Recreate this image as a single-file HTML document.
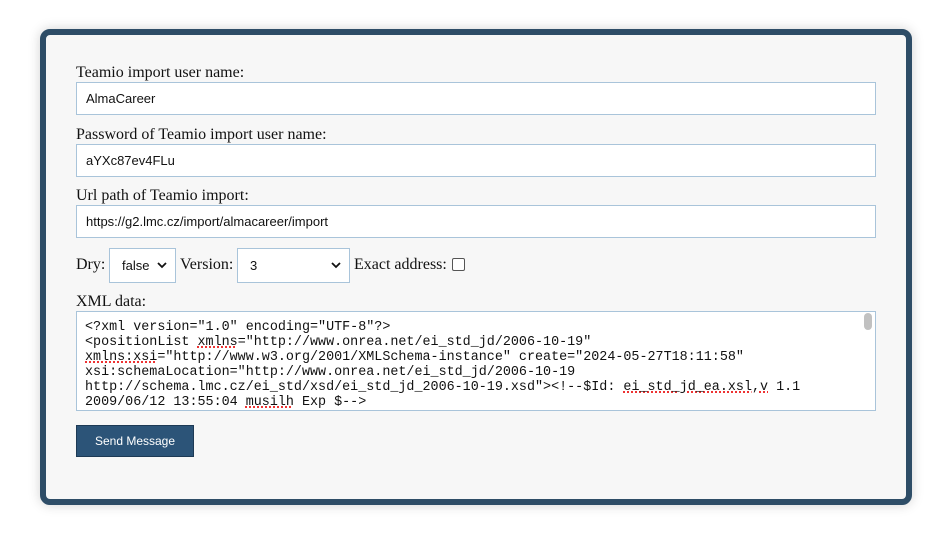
<!DOCTYPE html>
<html><head><style>
body{margin:0;width:943px;height:538px;background:#fff;position:relative;overflow:hidden;font-family:"Liberation Serif",serif;font-size:16px;color:#111}
.card{position:absolute;left:40px;top:29px;width:860px;height:464px;border:6px solid #2e4d67;border-radius:10px;background:#f7f7f7;box-shadow:0 0 12px rgba(0,0,0,.18)}
.lbl{position:absolute;left:76px;}
.inp{position:absolute;left:76px;border:1px solid #a9c4da;background:#fff;font-family:"Liberation Sans",sans-serif;font-size:13px;line-height:31px;padding-left:9px;box-sizing:border-box;width:800px;height:33px}
.sel{position:absolute;top:248px;height:35px;border:1px solid #a9c4da;background:#fff;box-sizing:border-box;font-family:"Liberation Sans",sans-serif;font-size:13px;line-height:33px}
.sel span{position:absolute;left:12px}
.sel svg{position:absolute;right:8px;top:13px}
.ta{position:absolute;left:76px;top:311px;width:800px;height:100px;border:1px solid #a9c4da;background:#fff;box-sizing:border-box;font-family:"Liberation Mono",monospace;font-size:13.4px;line-height:15px;padding:8px 0 0 8px;white-space:pre;overflow:hidden;color:#111}
.u{text-decoration:underline dotted #e33;text-decoration-thickness:2px}
.btn{position:absolute;left:76px;top:425px;width:118px;height:32px;background:#2c5478;border:1px solid #1d3a55;box-sizing:border-box;color:#fff;font-family:"Liberation Sans",sans-serif;font-size:12px;text-align:center;line-height:30px}
</style></head><body>
<div class="card"></div>
<div class="lbl" style="top:64px">Teamio import user name:</div>
<div class="inp" style="top:82px">AlmaCareer</div>
<div class="lbl" style="top:126px">Password of Teamio import user name:</div>
<div class="inp" style="top:144px">aYXc87ev4FLu</div>
<div class="lbl" style="top:187px">Url path of Teamio import:</div>
<div class="inp" style="top:205px">https://g2.lmc.cz/import/almacareer/import</div>
<div class="lbl" style="top:256px">Dry:</div>
<div class="sel" style="left:109px;width:67px"><span>false</span><svg width="10" height="7"><path d="M1 1l4 4 4-4" stroke="#111" stroke-width="1.8" fill="none"/></svg></div>
<div class="lbl" style="top:256px;left:180px">Version:</div>
<div class="sel" style="left:237px;width:113px"><span>3</span><svg width="10" height="7"><path d="M1 1l4 4 4-4" stroke="#111" stroke-width="1.8" fill="none"/></svg></div>
<div class="lbl" style="top:256px;left:354px">Exact address:</div>
<div style="position:absolute;left:452px;top:258px;width:11px;height:11px;border:1px solid #555;border-radius:2px;background:#fff"></div>
<div class="lbl" style="top:293px">XML data:</div>
<div class="ta">&lt;?xml version="1.0" encoding="UTF-8"?&gt;
&lt;positionList <span class="u">xmlns</span>="http://www.onrea.net/ei_std_jd/2006-10-19"
<span class="u">xmlns:xsi</span>="http://www.w3.org/2001/XMLSchema-instance" create="2024-05-27T18:11:58"
xsi:schemaLocation="http://www.onrea.net/ei_std_jd/2006-10-19
http://schema.lmc.cz/ei_std/xsd/ei_std_jd_2006-10-19.xsd"&gt;&lt;!--$Id: <span class="u">ei_std_jd_ea.xsl,v</span> 1.1
2009/06/12 13:55:04 <span class="u">musilh</span> Exp $--&gt;</div>
<div style="position:absolute;left:864px;top:313px;width:8px;height:17px;background:#c1c1c1;border-radius:4px"></div>
<div class="btn">Send Message</div>
</body></html>
